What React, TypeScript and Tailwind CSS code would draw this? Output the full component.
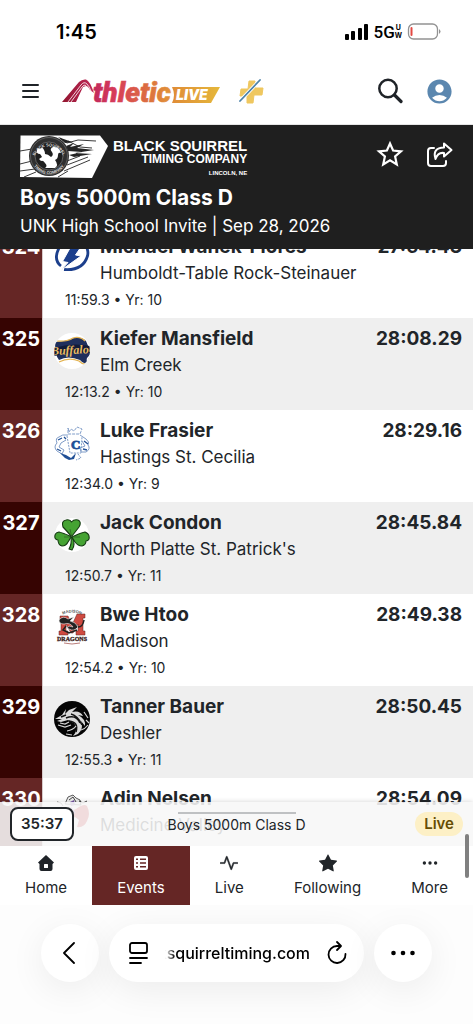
import type { ReactNode } from "react";
import { BsActivity, BsStarFill, BsThreeDots } from "react-icons/bs";
import { MdAccountCircle } from "react-icons/md";

function BoltLogo() {
  return (
    <svg viewBox="0 0 36 36" className="size-9">
      <circle cx="18" cy="18" r="18" fill="#fff" />
      <path d="M5 7 Q-1 19 7 25 M10 28.500 Q29 30 33.500 15 Q35 9 31 4" fill="none" stroke="#1c3f8c" strokeWidth="2.800" />
      <path d="M20 0 L31 0 L21.500 14 L27 15 L6 30 L14 21.500 L8.500 20.500Z" fill="#1c3f8c" stroke="#fff" strokeWidth="1" />
    </svg>
  );
}

function BuffaloLogo() {
  return (
    <svg viewBox="0 0 36 36" className="size-9">
      <clipPath id="buffalo-clip">
        <circle cx="18" cy="18" r="18" />
      </clipPath>
      <circle cx="18" cy="18" r="18" fill="#fff" />
      <g clipPath="url(#buffalo-clip)">
        <path d="M1 9 Q14 8 20 5 Q28 4 32 8 L37 20 L34 24 Q32 25 33 29 Q30 32 26 27 Q14 22 5 27 Q1 23 1 9Z" fill="#1f2f5c" />
        <path d="M3 8 Q13 9 19 5 Q26 3 31 8 M5 29 Q15 24 25 28 Q30 33 34 30 L35 25" fill="none" stroke="#e3b352" strokeWidth="1.200" />
        <path d="M0 15 Q18 9 36 13 V20 Q18 18 0 23Z" fill="#111b38" />
        <text x="-3" y="21" fontFamily="Liberation Serif, serif" fontSize="12" fontWeight="700" fontStyle="italic" fill="#e8bc62" transform="rotate(-3 18 18)">Buffaloes</text>
      </g>
    </svg>
  );
}

function BluehawkLogo() {
  return (
    <svg viewBox="0 0 36 36" className="size-9" fill="none" stroke="#7f9cc8" strokeWidth="1">
      <circle cx="18" cy="18" r="18" fill="#fff" stroke="none" />
      <path d="M14 3 L15 7 L17 4 L20 6 L23 2 L28 4 L26 9 L14 9Z" strokeDasharray="3 1" />
      <path d="M14 10 Q8 9 5 12 Q1 13 3 18 Q-1 22 3 26 L8 29 L10 25 L5 22 L7 18 L12 15 M26 10 L32 14 Q36 17 34 20 Q37 24 32 27 L27 27 L26 23 L31 21 L28 16" />
      <path d="M4 15 L8 13 M3 24 L7 26 M30 16 L34 19 M29 24 L33 25 M10 12 L12 14" stroke="#204f96" strokeWidth="1.300" />
      <path d="M6 28 L12 30 L17 33 L22 28 L20 34 L15 35 L11 33Z" fill="#204f96" stroke="none" />
      <path d="M24 29 L27 33 L22 35 M13 11 L16 28 L27 28 L28 12" strokeDasharray="2 1" />
      <text x="17" y="24" fontFamily="Liberation Serif, serif" fontSize="13" fontWeight="700" fill="#204f96" stroke="#204f96" strokeWidth="0.800">C</text>
    </svg>
  );
}

function ShamrockLogo() {
  return (
    <svg viewBox="0 0 36 36" className="size-9">
      <circle cx="18" cy="18" r="17" fill="#fff" />
      <g fill="#45a333" stroke="#153b12" strokeWidth="1.100" strokeLinejoin="round">
        <path d="M17 20 Q18 27 15 32 L18 33 Q22 27 18 20Z" />
        <path d="M17 19 Q12 13 9 10 Q7 4 12 3 Q16 2 17.500 5 Q20 2 24 3 Q28 5 25 10 Q22 14 18 19Z" />
        <path d="M16 19 Q9 16 5 15 Q0 16 1 21 Q2 23 4 23 Q4 28 8 29 Q12 29 14 25 Q16 22 17 20Z" />
        <path d="M18 20 Q26 16 31 15 Q36 17 35 22 Q34 24 32 24 Q32 28 28 29 Q24 29 21 25 Q19 22 18 20Z" />
      </g>
      <path d="M17.500 19 L16 12 M17 20 L10 20 M19 20 L26 20" stroke="#285f20" strokeWidth="0.700" />
    </svg>
  );
}

function MadisonLogo() {
  return (
    <svg viewBox="0 0 36 36" className="size-9">
      <circle cx="18" cy="18" r="18" fill="#fff" />
      <path d="M6 7 H14 L18 16 L23 5 H31 V9 H29 V22 H31 V26 H22 V22 H24 V15 L19 24 H17 L12 15 V22 H14 V26 H5 V22 H7 V11 H6Z" fill="#cf4a41" stroke="#5d2722" strokeWidth="0.500" />
      <path d="M5 11 Q9 6 14 10 L20 8 L16 12 Q22 13 24 18 Q20 23 15 20 Q12 19 15 17 L19 18 Q16 13 10 15 Q5 15 5 11Z" fill="#222" stroke="#eee" strokeWidth="0.600" />
      <path d="M24 18 Q29 18 30 11 M12 17 L9 21 L15 24 L23 21" fill="none" stroke="#222" strokeWidth="1.500" />
      <path id="madison-top" d="M8 6 Q18 1 28 6" fill="none" />
      <text fontFamily="Liberation Sans, sans-serif" fontSize="4" fontWeight="700" fill="#555"><textPath href="#madison-top" startOffset="50%" textAnchor="middle">MADISON</textPath></text>
      <text x="18" y="32" textAnchor="middle" fontFamily="Liberation Serif, serif" fontSize="6" fontWeight="700" fill="#3a2020" stroke="#3a2020" strokeWidth="0.300">DRAGONS</text>
      <path d="M10 34 Q18 36 26 34" fill="none" stroke="#9b4540" strokeWidth="0.700" />
    </svg>
  );
}

function DragonLogo() {
  return (
    <svg viewBox="0 0 36 36" className="size-9">
      <circle cx="18" cy="18" r="18" fill="#050505" />
      <path d="M1 18 L8 14 L12 8 L11 13 L15 9 L23 6 L18 11 Q26 9 29 15 L24 14 Q32 18 31 25 L27 20 Q30 28 24 33 L19 35 Q25 28 20 22 L14 19 L7 21 L3 20 L8 18Z" fill="#dadada" />
      <path d="M7 16 L12 14 M12 17 Q22 13 26 22 M17 13 Q24 15 28 24 M15 20 Q25 21 22 31" fill="none" stroke="#111" strokeWidth="1.500" />
      <path d="M6 22 L11 23 L15 21 M4 24 L11 26 L17 24 M13 30 Q19 29 22 25 M12 33 L18 34 M30 11 L34 17 M32 19 L35 22 M27 29 Q31 28 34 24" fill="none" stroke="#d5d5d5" strokeWidth="1.200" />
    </svg>
  );
}

function RaiderLogo() {
  return (
    <svg viewBox="0 0 36 36" className="size-9">
      <path d="M11 11 L14 4 L19 2 L22 5 L26 7 L27 12 Z" fill="#efefef" stroke="#333" strokeWidth="0.800" />
      <path d="M15 7 L19 4 L22 9 M3 9 L7 10 L9 13 M25 8 L29 10 L33 8" fill="none" stroke="#333" strokeWidth="0.900" />
      <path d="M16 9 L20 7 L21 12 L17 13Z" fill="#7959a5" />
      <path d="M22 16 Q30 10 33 13 Q37 21 33 28 Q30 35 23 34 L25 27 L21 24 Q17 28 13 25 L15 19Z" fill="#c11f26" />
      <path d="M7 14 L12 20 L17 15 L21 20 M9 23 L15 22" fill="none" stroke="#85a" strokeWidth="1.500" />
    </svg>
  );
}

interface Result {
  place: number;
  name: string;
  team: string;
  split: string;
  year: number;
  time: string;
  logo: ReactNode;
}

const results: Result[] = [
  { place: 324, name: "Michael Wanek-Flores", team: "Humboldt-Table Rock-Steinauer", split: "11:59.3", year: 10, time: "27:54.43", logo: <BoltLogo /> },
  { place: 325, name: "Kiefer Mansfield", team: "Elm Creek", split: "12:13.2", year: 10, time: "28:08.29", logo: <BuffaloLogo /> },
  { place: 326, name: "Luke Frasier", team: "Hastings St. Cecilia", split: "12:34.0", year: 9, time: "28:29.16", logo: <BluehawkLogo /> },
  { place: 327, name: "Jack Condon", team: "North Platte St. Patrick's", split: "12:50.7", year: 11, time: "28:45.84", logo: <ShamrockLogo /> },
  { place: 328, name: "Bwe Htoo", team: "Madison", split: "12:54.2", year: 10, time: "28:49.38", logo: <MadisonLogo /> },
  { place: 329, name: "Tanner Bauer", team: "Deshler", split: "12:55.3", year: 11, time: "28:50.45", logo: <DragonLogo /> },
  { place: 330, name: "Adin Nelsen", team: "Medicine Valley", split: "12:58.1", year: 9, time: "28:54.09", logo: <RaiderLogo /> },
];

function ResultRow({ result }: { result: Result }) {
  return (
    <li className="group flex h-[92px] bg-white even:bg-[#efefef]">
      <div className="w-[43px] shrink-0 border-r border-[#d8cccc] bg-[#652625] pt-2 text-center text-xl leading-[26px] font-bold text-white group-even:bg-[#360402]">
        {result.place}
      </div>
      <div className="min-w-0 flex-1 pr-[11px] pl-[11px]">
        <div className="flex">
          <div className="w-[46px] shrink-0 pt-[15px]">{result.logo}</div>
          <div className="min-w-0 flex-1 pt-2">
            <div className="flex justify-between gap-2 text-[19px] leading-[26px] font-bold whitespace-nowrap">
              <span>{result.name}</span>
              <span>{result.time}</span>
            </div>
            <div className="truncate text-[17px] leading-[26px]">{result.team}</div>
          </div>
        </div>
        <div className="pt-1 pl-[11px] text-sm leading-5">
          {result.split} • Yr: {result.year}
        </div>
      </div>
    </li>
  );
}

function StatusBar() {
  return (
    <div className="flex h-[58px] items-center justify-between pt-[5px] pr-8 pl-14 text-black">
      <span className="text-xl leading-6 font-semibold">1:45</span>
      <div className="flex items-center gap-1">
        <svg viewBox="0 0 25 16" className="h-4 w-[25px]">
          <rect x="1" y="10" width="4" height="6" rx="1" />
          <rect x="7" y="7" width="4" height="9" rx="1" />
          <rect x="14" y="4" width="4" height="12" rx="1" />
          <rect x="20" y="0" width="4" height="16" rx="1" />
        </svg>
        <div className="flex items-center">
          <span className="font-[Roboto] text-[17px] leading-5 font-medium">5G</span>
          <span className="flex flex-col text-center text-[7px] leading-[8px] font-bold">
            <span>U</span>
            <span>W</span>
          </span>
        </div>
        <svg viewBox="0 0 35 17" className="h-[17px] w-[35px]">
          <rect x="2.500" y="1" width="29" height="15" rx="5" fill="#fff" stroke="#929292" strokeWidth="1.300" />
          <rect x="4.500" y="4" width="2" height="9" rx="1" fill="#e34942" />
          <path d="M33 6 Q36 8.500 33 11Z" fill="#929292" />
        </svg>
      </div>
    </div>
  );
}

function AthleticLogo() {
  return (
    <svg viewBox="0 0 160 28" className="h-7 w-40 overflow-visible" role="img" aria-label="AthleticLIVE">
      <defs>
        <linearGradient id="brand" gradientUnits="userSpaceOnUse" x1="0" x2="112" y1="0" y2="0">
          <stop offset="0" stopColor="#92152f" />
          <stop offset="0.300" stopColor="#c42a5c" />
          <stop offset="0.480" stopColor="#d73c59" />
          <stop offset="0.800" stopColor="#dd753d" />
          <stop offset="1" stopColor="#e29a38" />
        </linearGradient>
        <linearGradient id="live" x1="0" x2="1" y1="0" y2="0">
          <stop offset="0" stopColor="#e08c36" />
          <stop offset="1" stopColor="#e5b83b" />
        </linearGradient>
      </defs>
      <path d="M0 25 L17 5 Q20 2 24 2.500 Q28 4 32 16 L28 13 Q26 9 24 9 L21 10 L14 25Z" fill="url(#brand)" />
      <path d="M6 25 L19 8 Q22 4 25 7 Q27 9 29 14 M9 25 L20 10 Q22 7 24 8.500" fill="none" stroke="#fff" strokeWidth="0.800" />
      <text x="31" y="25" fontFamily="Roboto, sans-serif" fontSize="28" fontWeight="900" fontStyle="italic" fill="url(#brand)" stroke="url(#brand)" strokeWidth="0.600">thletic</text>
      <path d="M110 10 H158 L149 26 H110 Q114 18 110 10Z" fill="url(#live)" />
      <text x="114" y="23" fontFamily="Inter, sans-serif" fontSize="14" fontWeight="900" fontStyle="italic" fill="#fff">LIVE</text>
    </svg>
  );
}

function AppHeader() {
  return (
    <header className="flex h-[67px] items-center border-b border-[#e5e5e5] pr-[19px] pl-[21px]">
      <button type="button" aria-label="Menu">
        <svg viewBox="0 0 19 16" className="h-4 w-[19px]" stroke="#1f2328" strokeWidth="2" strokeLinecap="round">
          <path d="M2 2 H17 M2 8 H17 M2 14 H17" />
        </svg>
      </button>
      <a href="#home" className="ml-[22px]">
        <AthleticLogo />
      </a>
      <a href="#plus" aria-label="Plus" className="ml-4">
        <svg viewBox="0 0 26 26" className="size-[26px]">
          <path d="M11 3 H17 V10 H25 L24 17 H16 L15 25 H9 V18 H2 L3 11 H10Z" fill="#efc75f" stroke="#efc75f" strokeLinejoin="round" />
          <path d="M2 23 L22 2" stroke="#fff" strokeWidth="3.500" />
          <path d="M2 23 L22 2" stroke="#4d83aa" strokeWidth="1.800" strokeLinecap="round" />
        </svg>
      </a>
      <button type="button" aria-label="Search" className="ml-auto">
        <svg viewBox="0 0 26 26" className="size-[26px]" fill="none" stroke="#1f2328" strokeWidth="2.500">
          <circle cx="11" cy="10.500" r="8.700" />
          <path d="M17.500 17 L24 23.500" strokeWidth="3.200" strokeLinecap="round" />
        </svg>
      </button>
      <button type="button" aria-label="Account" className="ml-[22px]">
        <MdAccountCircle className="size-[29px] text-[#5b87af]" />
      </button>
    </header>
  );
}

function SquirrelBadge() {
  return (
    <svg viewBox="0 0 88 43" className="h-[43px] w-[88px]">
      <path d="M0.500 0.500 H80 L88 11 L72 43 L0 42Z" fill="#fff" />
      <path d="M0 16 L12 14 M0 29 L12 26 M0 36 L15 34 M4 42 L16 37 M40 3 L47 8 L58 5 L76 6 M44 36 L70 25 M47 30 L68 22 M47 26 L60 21 M38 42 L48 36 M48 6 L60 12 L72 13" fill="none" stroke="#242424" strokeWidth="0.900" />
      <path d="M46 11 L54 8 L50 12 L64 9 L57 13 L74 15 L55 18 L72 19 L54 22 L49 20 L62 17 L48 16Z M38 2 L52 7 L45 8Z" fill="#242424" />
      <circle cx="29" cy="21" r="20" fill="#303030" />
      <circle cx="29" cy="21" r="18.500" fill="none" stroke="#8a8a8a" strokeWidth="0.500" />
      <circle cx="29" cy="21" r="14" fill="#202020" stroke="#999" strokeWidth="0.500" />
      <path id="badge-top" d="M14 24 A15.200 15.200 0 0 1 44 24" fill="none" />
      <path id="badge-bottom" d="M12 27 A18 18 0 0 0 46 27" fill="none" />
      <g fontFamily="Liberation Sans, sans-serif" fontSize="4" fontWeight="700" fill="#ddd">
        <text><textPath href="#badge-top" startOffset="50%" textAnchor="middle">BLACK SQUIRREL</textPath></text>
        <text><textPath href="#badge-bottom" startOffset="50%" textAnchor="middle">TIMING COMPANY</textPath></text>
      </g>
      <path d="M17 15 Q18 12 20.500 14 L22 12.500 Q25 15 25 19 Q28 19 31 22 Q34 20 32 17 Q29 14 33 12 Q39 11 41 18 Q38 17 38 20 Q38 24 35 25 Q39 30 35 33 H25 Q28 31 25 28 Q23 25 21 26 L19 24 L22 22 Q21 20 20 19 Q16 19 17 15Z" fill="#fff" />
    </svg>
  );
}

function EventHeader() {
  return (
    <section className="bg-[#1f1f1f] pt-[10px] pr-5 pb-[9px] pl-5 text-white">
      <div className="flex items-start">
        <SquirrelBadge />
        <div className="ml-1 flex flex-col items-end pt-[3px] pl-px font-['Liberation_Sans',sans-serif] font-bold whitespace-nowrap">
          <span className="text-[15px] leading-[15px]">BLACK SQUIRREL</span>
          <span className="text-xs leading-3">TIMING COMPANY</span>
          <span className="pt-[3px] text-[6px] leading-[10px]">LINCOLN, NE</span>
        </div>
        <button type="button" aria-label="Follow event" className="mt-1 ml-auto">
          <svg viewBox="0 0 28 28" className="size-7" fill="none" stroke="#fff" strokeWidth="2.200">
            <path d="M14 4.500 L17.100 11.500 L25 12.300 L19.100 17.500 L20.800 25.500 L14 21.400 L7.200 25.500 L8.900 17.500 L3 12.300 L10.900 11.500Z" />
          </svg>
        </button>
        <button type="button" aria-label="Share" className="mt-[6px] ml-[22px]">
          <svg viewBox="0 0 27 27" className="size-[27px]" fill="none" stroke="#fff" strokeWidth="2" strokeLinecap="round" strokeLinejoin="round">
            <path d="M8 7 H5 Q2 7 2 10 V22 Q2 25 5 25 H17 Q20 25 20 22 V20" />
            <path d="M18 2.500 L25.500 9 L18 15.500 V12 Q12 11 9.500 18 Q6 7 18 6.500Z" />
          </svg>
        </button>
      </div>
      <h1 className="pt-[6px] text-[21px] leading-7 font-bold">Boys 5000m Class D</h1>
      <p className="text-[17px] leading-7">UNK High School Invite | Sep 28, 2026</p>
    </section>
  );
}

function TabBar() {
  const tab = "flex flex-auto flex-col items-center gap-[6px] pt-2 text-[15px] leading-5";
  return (
    <nav className="relative flex h-[59px] bg-white">
      <a href="#home" className={tab}>
        <svg viewBox="0 0 18 18" className="size-[18px]">
          <path d="M9 1 L17 8.500 L15.500 10 V15 Q15.500 17 13.500 17 H4.500 Q2.500 17 2.500 15 V10 L1 8.500Z" fill="#1f2328" />
          <rect x="7" y="10" width="4" height="4" rx="0.500" fill="#fff" />
        </svg>
        Home
      </a>
      <a href="#events" aria-current="page" className="flex flex-auto flex-col items-center gap-[6px] bg-[#652625] pt-2 text-[15px] leading-5 text-white">
        <svg viewBox="0 0 18 18" className="size-[18px]">
          <rect x="2" y="2" width="14" height="14" rx="2" fill="#fff" />
          <path d="M4 4.500 H6 V6 H4Z M8 4.500 H14 V6 H8Z M4 8.300 H6 V9.800 H4Z M8 8.300 H14 V9.800 H8Z M4 12 H6 V13.500 H4Z M8 12 H14 V13.500 H8Z" fill="#652625" />
        </svg>
        Events
      </a>
      <a href="#live" className={tab}>
        <BsActivity className="size-[18px] stroke-[0.5]" />
        Live
      </a>
      <a href="#following" className={tab}>
        <BsStarFill className="size-[18px]" />
        Following
      </a>
      <a href="#more" className={tab}>
        <BsThreeDots className="size-[18px]" />
        More
      </a>
      <div className="absolute -top-3 right-1 h-11 w-1 rounded-full bg-[#808080]" />
    </nav>
  );
}

function BrowserBar() {
  const shape = "bg-white shadow-[0_8px_36px_rgba(0,0,0,0.07)]";
  return (
    <footer className="flex h-[119px] shrink-0 gap-[10px] bg-[#fdfdfd] px-[41px] pt-[19px] text-black">
      <button type="button" aria-label="Back" className={`flex size-[58px] shrink-0 items-center justify-center rounded-full ${shape}`}>
        <svg viewBox="0 0 14 24" className="h-6 w-[14px]" fill="none" stroke="currentColor" strokeWidth="1.800" strokeLinecap="round" strokeLinejoin="round">
          <path d="M11 2 L1 12 L11 22" />
        </svg>
      </button>
      <div className={`flex h-[58px] min-w-0 flex-1 items-center justify-between rounded-full pr-4 pl-5 ${shape}`}>
        <button type="button" aria-label="Page menu">
          <svg viewBox="0 0 20 24" className="h-6 w-5" fill="none" stroke="currentColor" strokeWidth="1.800" strokeLinecap="round">
            <rect x="1" y="2" width="17" height="10" rx="2" />
            <path d="M1 17 H18 M1 22 H12" />
          </svg>
        </button>
        <span className="flex w-[145px] justify-end overflow-hidden text-base font-medium whitespace-nowrap [mask-image:linear-gradient(to_right,transparent,black_10px)]">
          blacksquirreltiming.com
        </span>
        <button type="button" aria-label="Reload">
          <svg viewBox="0 0 22 26" className="h-[26px] w-[22px]" fill="none" stroke="currentColor" strokeWidth="1.800" strokeLinecap="round" strokeLinejoin="round">
            <path d="M19.500 14 A8.500 8.500 0 1 1 11 6 H14" />
            <path d="M11 2 L15 6 L11 10" />
          </svg>
        </button>
      </div>
      <button type="button" aria-label="More options" className={`flex size-[58px] shrink-0 items-center justify-center rounded-full ${shape}`}>
        <svg viewBox="0 0 26 6" className="h-[6px] w-[26px]">
          <circle cx="3.500" cy="3" r="2.300" />
          <circle cx="13" cy="3" r="2.300" />
          <circle cx="22.500" cy="3" r="2.300" />
        </svg>
      </button>
    </footer>
  );
}

export default function App() {
  return (
    <div className="flex h-screen flex-col bg-white font-[Inter,sans-serif] text-[#212529]">
      <StatusBar />
      <AppHeader />
      <EventHeader />
      <main className="relative min-h-0 flex-1 overflow-hidden">
        <ol className="-mt-[23px]">
          {results.map((result) => (
            <ResultRow key={result.place} result={result} />
          ))}
        </ol>
        <div className="absolute inset-x-0 bottom-0 flex h-11 items-center justify-between bg-[#f7f7f7]/88 px-[10px] shadow-[0_0_5px_rgba(0,0,0,0.18)]">
          <button type="button" className="h-[34px] w-16 rounded-lg border-2 border-[#212529] bg-white text-[15px] font-semibold">
            35:37
          </button>
          <span className="rounded-full bg-[#fdf0c6] px-[9px] text-[15px] leading-6 font-semibold text-[#664d03]">Live</span>
          <div className="absolute inset-x-0 top-[10px] flex flex-col items-center text-sm leading-[22px]">
            <div className="h-[2px] w-[118px] bg-[#bfc1c3]" />
            Boys 5000m Class D
          </div>
        </div>
      </main>
      <TabBar />
      <BrowserBar />
    </div>
  );
}
